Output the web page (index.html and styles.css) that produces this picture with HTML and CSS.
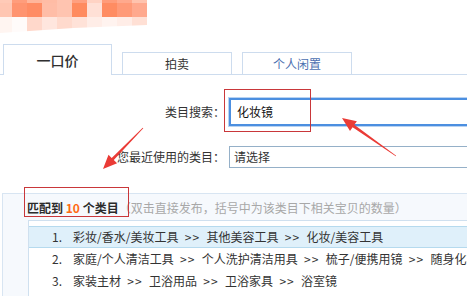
FILE: index.html
```html
<!DOCTYPE html>
<html lang="zh-CN">
<head>
<meta charset="utf-8">
<title>发布宝贝</title>
<link rel="stylesheet" href="styles.css">
</head>
<body>
<div class="page">
  <div class="mosaic">
    <i class="c r1a"></i><i class="c r1b"></i><i class="c r1c"></i><i class="c r1d"></i><i class="c r1e"></i><i class="c r1f"></i><i class="c r1g"></i><i class="c r1h"></i><i class="c r1i"></i><i class="c r1j"></i>
    <i class="c r2a"></i><i class="c r2b"></i><i class="c r2c"></i><i class="c r2d"></i><i class="c r2e"></i><i class="c r2f"></i><i class="c r2g"></i><i class="c r2h"></i><i class="c r2i"></i><i class="c r2j"></i>
    <i class="c r3a"></i><i class="c r3b"></i><i class="c r3c"></i><i class="c r3d"></i><i class="c r3e"></i><i class="c r3f"></i><i class="c r3g"></i><i class="c r3h"></i><i class="c r3i"></i><i class="c r3j"></i>
  </div>

  <div class="tabs">
    <div class="tab tab-active">一口价</div>
    <div class="tab tab-auction">拍卖</div>
    <div class="tab tab-idle">个人闲置</div>
  </div>

  <div class="form">
    <div class="form-row row-search">
      <label class="form-label">类目搜索：</label>
      <div class="search-input">化妆镜</div>
    </div>
    <div class="form-row row-recent">
      <label class="form-label">您最近使用的类目：</label>
      <div class="recent-select">请选择</div>
    </div>
  </div>

  <div class="panel">
    <div class="panel-head"><b class="match">匹配到 <em>10</em> 个类目</b><span class="hint">（双击直接发布，括号中为该类目下相关宝贝的数量）</span></div>
    <ul class="result-list">
      <li class="result result-on"><span class="num">1.</span>彩妆/香水/美妆工具<span class="sep">&gt;&gt;</span>其他美容工具<span class="sep">&gt;&gt;</span>化妆/美容工具</li>
      <li class="result"><span class="num">2.</span>家庭/个人清洁工具<span class="sep">&gt;&gt;</span>个人洗护清洁用具<span class="sep">&gt;&gt;</span>梳子/便携用镜<span class="sep">&gt;&gt;</span>随身化妆镜</li>
      <li class="result"><span class="num">3.</span>家装主材<span class="sep">&gt;&gt;</span>卫浴用品<span class="sep">&gt;&gt;</span>卫浴家具<span class="sep">&gt;&gt;</span>浴室镜</li>
    </ul>
  </div>

  <svg class="marks" width="467" height="296" viewBox="0 0 467 296" xmlns="http://www.w3.org/2000/svg">
    <rect x="224.5" y="89.5" width="86" height="42" fill="none" stroke="#c9373a" stroke-width="1"/>
    <rect x="24.5" y="187.5" width="104" height="29" fill="none" stroke="#c9373a" stroke-width="1"/>
    <polygon fill="#ea3b36" points="342,118 356.9,121.2 354.3,124.8 396.2,155.7 395.8,156.3 352.6,127.3 350,131"/>
    <polygon fill="#ea3b36" points="103,169 108.5,154.8 111.7,157.9 142.7,127.7 143.3,128.3 113.8,160 117.1,163.2"/>
  </svg>
</div>
</body>
</html>
```
FILE: styles.css
```css
* { box-sizing: border-box; }
html, body { margin: 0; padding: 0; background: #fff; }
body {
  width: 467px;
  height: 296px;
  overflow: hidden;
  font-family: "Noto Sans CJK SC", "Noto Sans", sans-serif;
  font-size: 12px;
  color: #333;
}
.page { position: relative; width: 467px; height: 296px; overflow: hidden; }

/* blurred logo mosaic */
.mosaic {
  display: grid;
  grid-template-columns: 12px repeat(9, 15px);
  grid-template-rows: 3px 14px 16px;
  width: 147px;
  height: 33px;
  clip-path: polygon(0 0, 100% 0, 100% 25px, 50% 28px, 0 33px);
}
.c { display: block; }
.r1a { background: #ffcab7; } .r1b { background: #ff9d7c; } .r1c { background: #ffb69c; } .r1d { background: #ffbca5; } .r1e { background: #ffc4b0; }
.r1f { background: #ffa080; } .r1g { background: #ffd3c4; } .r1h { background: #ff9c7a; } .r1i { background: #ffa98d; } .r1j { background: #ffc3ae; }
.r2a { background: #ffc6b2; } .r2b { background: #ff9470; } .r2c { background: #ff8c64; } .r2d { background: #ffbda7; } .r2e { background: #ffc4b0; }
.r2f { background: #ff8b5f; } .r2g { background: #ffe0d6; } .r2h { background: #ff8c62; } .r2i { background: #ff9a78; } .r2j { background: #ffa98e; }
.r3a { background: #fff5f1; } .r3b { background: #fffbfa; } .r3c { background: #ffd8cb; } .r3d { background: #ffe6de; } .r3e { background: #ffdacd; }
.r3f { background: #ffe2d8; } .r3g { background: #ffede7; } .r3h { background: #fff3ef; } .r3i { background: #ffede7; } .r3j { background: #ffe0d5; }

/* tabs */
.tabs {
  display: flex;
  align-items: flex-end;
  gap: 10px;
  height: 31px;
  margin-top: 11px;
  padding-left: 3px;
  border-bottom: 1px solid #cddcee;
}
.tab {
  flex: none;
  border: 1px solid #cddcee;
  border-bottom: none;
  background: #fff;
  text-align: center;
}
.tab-active {
  width: 109px;
  height: 31px;
  margin-bottom: -1px;
  font-size: 14px;
  line-height: 30px;
  color: #2f2f2f;
  font-weight: 500;
}
.tab-auction {
  width: 110px;
  height: 22px;
  line-height: 22px;
  color: #333;
}
.tab-idle {
  width: 110px;
  height: 22px;
  line-height: 22px;
  color: #4c6fb0;
}

/* form */
.form { padding-top: 23px; }
.form-row { display: flex; align-items: center; }
.form-label {
  flex: none;
  width: 225px;
  text-align: right;
  color: #333;
  line-height: 16px;
}
.row-search { height: 28px; }
.row-recent { height: 22px; margin-top: 20px; }
.search-input {
  flex: none;
  margin-left: 4px;
  width: 300px;
  height: 28px;
  border: 2px solid #4c8fe0;
  box-shadow: 0 0 0 1px #b9d3f2;
  padding-left: 6px;
  line-height: 24px;
  color: #111;
}
.recent-select {
  flex: none;
  margin-left: 4px;
  width: 300px;
  height: 22px;
  border: 1px solid #95b0c8;
  padding-left: 4px;
  line-height: 20px;
  color: #333;
}

/* result panel */
.panel {
  margin-top: 25px;
  margin-left: 2px;
  width: 520px;
  height: 120px;
  border: 1px solid #d8e5f2;
  border-right: none;
  background: #f6f9fd;
}
.panel-head {
  height: 26px;
  padding-left: 24px;
  padding-top: 1px;
  line-height: 26px;
  white-space: nowrap;
}
.match { font-weight: 700; color: #2b2b2b; }
.match em { font-style: normal; color: #ff6a13; }
.hint { color: #a8a8a8; }
.result-list {
  list-style: none;
  margin: 0 0 0 25px;
  padding: 5px 0 0 0;
  background: #fff;
  border-top: 1px solid #cfe0ef;
  border-left: 1px solid #cfe0ef;
  height: 100px;
}
.result {
  height: 22px;
  line-height: 22px;
  padding-left: 23px;
  white-space: nowrap;
  color: #333;
}
.result-on {
  line-height: 20px;
  background: #dff0fa;
  border-top: 1px solid #b5daee;
  border-bottom: 1px solid #b5daee;
}
.num { display: inline-block; width: 21px; }
.sep { display: inline-block; width: 28px; text-align: center; letter-spacing: 1px; }

/* annotation overlay */
.marks { position: absolute; left: 0; top: 0; pointer-events: none; }
```
